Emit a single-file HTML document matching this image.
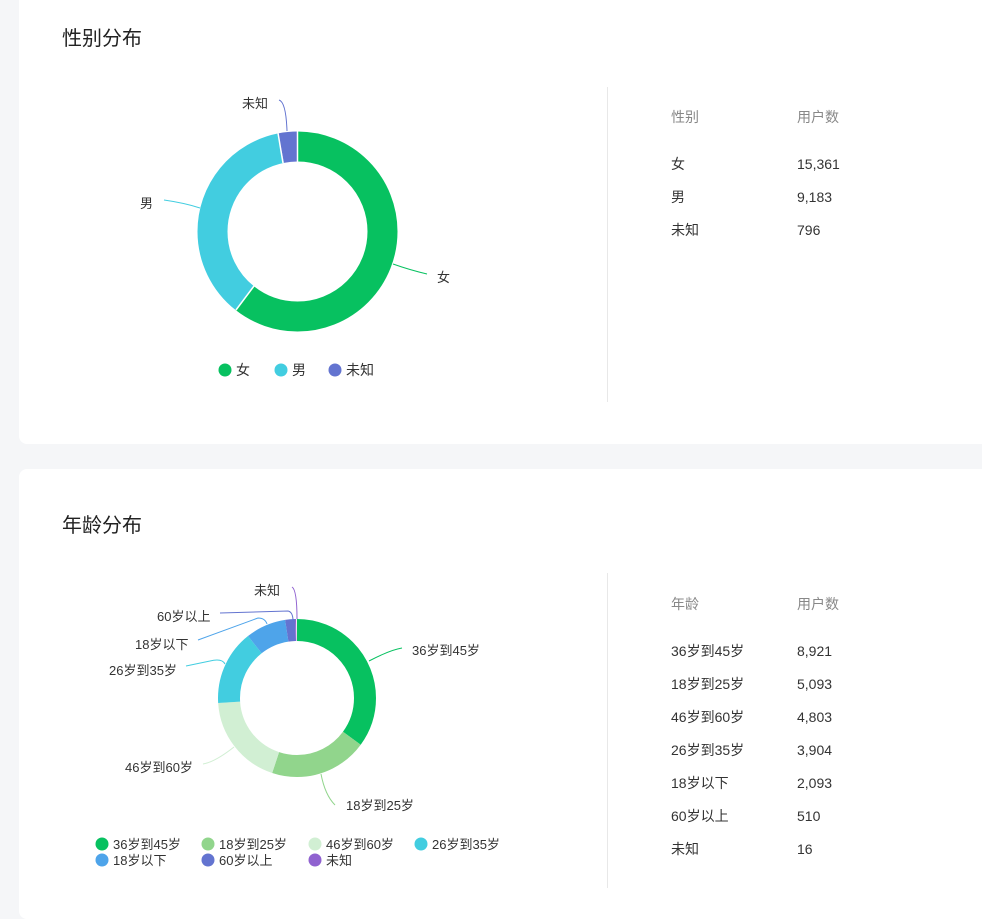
<!DOCTYPE html>
<html><head><meta charset="utf-8">
<style>
*{margin:0;padding:0;box-sizing:border-box}
body{width:982px;height:898px;background:#f5f6f8;position:relative;overflow:hidden;font-family:"Liberation Sans","Noto Sans CJK SC",sans-serif;color:#333}
.card{position:absolute;left:19px;width:980px;background:#fff;border-radius:8px}
.t{position:absolute;white-space:nowrap;font-size:14px;line-height:16px}
.title{position:absolute;left:62px;font-size:20px;color:#222}
.vl{position:absolute;left:607px;width:1px;background:#e8e8e8}
.g{color:#888}
svg{position:absolute;left:0;top:0}
</style></head><body>
<div class="card" style="top:-10px;height:454px"></div>
<div class="card" style="top:469px;height:450px"></div>
<div class="title" style="top:22px">性别分布</div>
<div class="title" style="top:509px">年龄分布</div>
<div class="vl" style="top:87px;height:315px"></div>
<div class="vl" style="top:573px;height:315px"></div>

<svg width="982" height="898" style="font-family:'Liberation Sans','Noto Sans CJK SC',sans-serif">
 <g transform="translate(297.5,231.5) rotate(-90)" fill="none" stroke-width="30">
  <circle r="85" stroke="#07c160" stroke-dasharray="323.8 1000"/>
  <circle r="85" stroke="#42cde0" stroke-dasharray="193.5 1000" stroke-dashoffset="-323.8"/>
  <circle r="85" stroke="#6374d0" stroke-dasharray="16.8 1000" stroke-dashoffset="-517.3"/>
 </g>
 <g stroke="#fff" stroke-width="1.5">
  <line x1="297.5" y1="131" x2="297.5" y2="162"/>
  <line x1="236" y1="310" x2="254" y2="286"/>
  <line x1="278" y1="133" x2="283" y2="163"/>
 </g>
 <g fill="none" stroke-width="1">
  <path d="M393 264 Q410 270 427 274" stroke="#07c160"/>
  <path d="M164 200 Q185 203 200 208" stroke="#42cde0"/>
  <path d="M279 100 Q286 102 287 131" stroke="#6374d0"/>
 </g>
 <g font-size="13" fill="#333">
  <text x="437" y="282">女</text>
  <text x="140" y="208">男</text>
  <text x="242" y="108">未知</text>
 </g>
 <circle cx="225" cy="370" r="6.5" fill="#07c160"/>
 <circle cx="281" cy="370" r="6.5" fill="#42cde0"/>
 <circle cx="335" cy="370" r="6.5" fill="#6374d0"/>
 <g font-size="14" fill="#333">
  <text x="236" y="375">女</text>
  <text x="292" y="375">男</text>
  <text x="346" y="375">未知</text>
 </g>

 <g transform="translate(297,698) rotate(-90)" fill="none" stroke-width="22">
  <circle r="68" stroke="#07c160" stroke-dasharray="149.8 1000"/>
  <circle r="68" stroke="#91d58c" stroke-dasharray="85.5 1000" stroke-dashoffset="-149.8"/>
  <circle r="68" stroke="#d1efd3" stroke-dasharray="80.7 1000" stroke-dashoffset="-235.3"/>
  <circle r="68" stroke="#42cde0" stroke-dasharray="65.6 1000" stroke-dashoffset="-316"/>
  <circle r="68" stroke="#4ea4ea" stroke-dasharray="35.2 1000" stroke-dashoffset="-381.6"/>
  <circle r="68" stroke="#6374d0" stroke-dasharray="8.5 1000" stroke-dashoffset="-416.8"/>
  <circle r="68" stroke="#9062d0" stroke-dasharray="1 1000" stroke-dashoffset="-425.3"/>
 </g>
 <g fill="none" stroke-width="1">
  <path d="M369 661 Q390 650 402 648" stroke="#07c160"/>
  <path d="M321 774 Q325 795 335 805" stroke="#91d58c"/>
  <path d="M234 747 Q215 762 203 764" stroke="#d1efd3"/>
  <path d="M225 664 Q222 658 210 661 L186 666" stroke="#42cde0"/>
  <path d="M267 624 Q265 618 258 618 L198 640" stroke="#4ea4ea"/>
  <path d="M293 621 Q293 612 288 611 L220 613" stroke="#6374d0"/>
  <path d="M297 619 Q297 590 292 587" stroke="#9062d0"/>
 </g>
 <g font-size="13" fill="#333">
  <text x="412" y="655">36岁到45岁</text>
  <text x="346" y="810">18岁到25岁</text>
  <text x="125" y="772">46岁到60岁</text>
  <text x="109" y="675">26岁到35岁</text>
  <text x="135" y="649">18岁以下</text>
  <text x="157" y="621">60岁以上</text>
  <text x="254" y="595">未知</text>
 </g>
 <g>
  <circle cx="102" cy="844" r="6.5" fill="#07c160"/>
  <circle cx="208" cy="844" r="6.5" fill="#91d58c"/>
  <circle cx="315" cy="844" r="6.5" fill="#d1efd3"/>
  <circle cx="421" cy="844" r="6.5" fill="#42cde0"/>
  <circle cx="102" cy="860" r="6.5" fill="#4ea4ea"/>
  <circle cx="208" cy="860" r="6.5" fill="#6374d0"/>
  <circle cx="315" cy="860" r="6.5" fill="#9062d0"/>
 </g>
 <g font-size="13" fill="#333">
  <text x="113" y="849">36岁到45岁</text>
  <text x="219" y="849">18岁到25岁</text>
  <text x="326" y="849">46岁到60岁</text>
  <text x="432" y="849">26岁到35岁</text>
  <text x="113" y="865">18岁以下</text>
  <text x="219" y="865">60岁以上</text>
  <text x="326" y="865">未知</text>
 </g>
</svg>

<div class="t g" style="left:671px;top:109px">性别</div><div class="t g" style="left:797px;top:109px">用户数</div>
<div class="t" style="left:671px;top:156px">女</div><div class="t" style="left:797px;top:156px">15,361</div>
<div class="t" style="left:671px;top:189px">男</div><div class="t" style="left:797px;top:189px">9,183</div>
<div class="t" style="left:671px;top:222px">未知</div><div class="t" style="left:797px;top:222px">796</div>

<div class="t g" style="left:671px;top:596px">年龄</div><div class="t g" style="left:797px;top:596px">用户数</div>
<div class="t" style="left:671px;top:643px">36岁到45岁</div><div class="t" style="left:797px;top:643px">8,921</div>
<div class="t" style="left:671px;top:676px">18岁到25岁</div><div class="t" style="left:797px;top:676px">5,093</div>
<div class="t" style="left:671px;top:709px">46岁到60岁</div><div class="t" style="left:797px;top:709px">4,803</div>
<div class="t" style="left:671px;top:742px">26岁到35岁</div><div class="t" style="left:797px;top:742px">3,904</div>
<div class="t" style="left:671px;top:775px">18岁以下</div><div class="t" style="left:797px;top:775px">2,093</div>
<div class="t" style="left:671px;top:808px">60岁以上</div><div class="t" style="left:797px;top:808px">510</div>
<div class="t" style="left:671px;top:841px">未知</div><div class="t" style="left:797px;top:841px">16</div>
</body></html>
